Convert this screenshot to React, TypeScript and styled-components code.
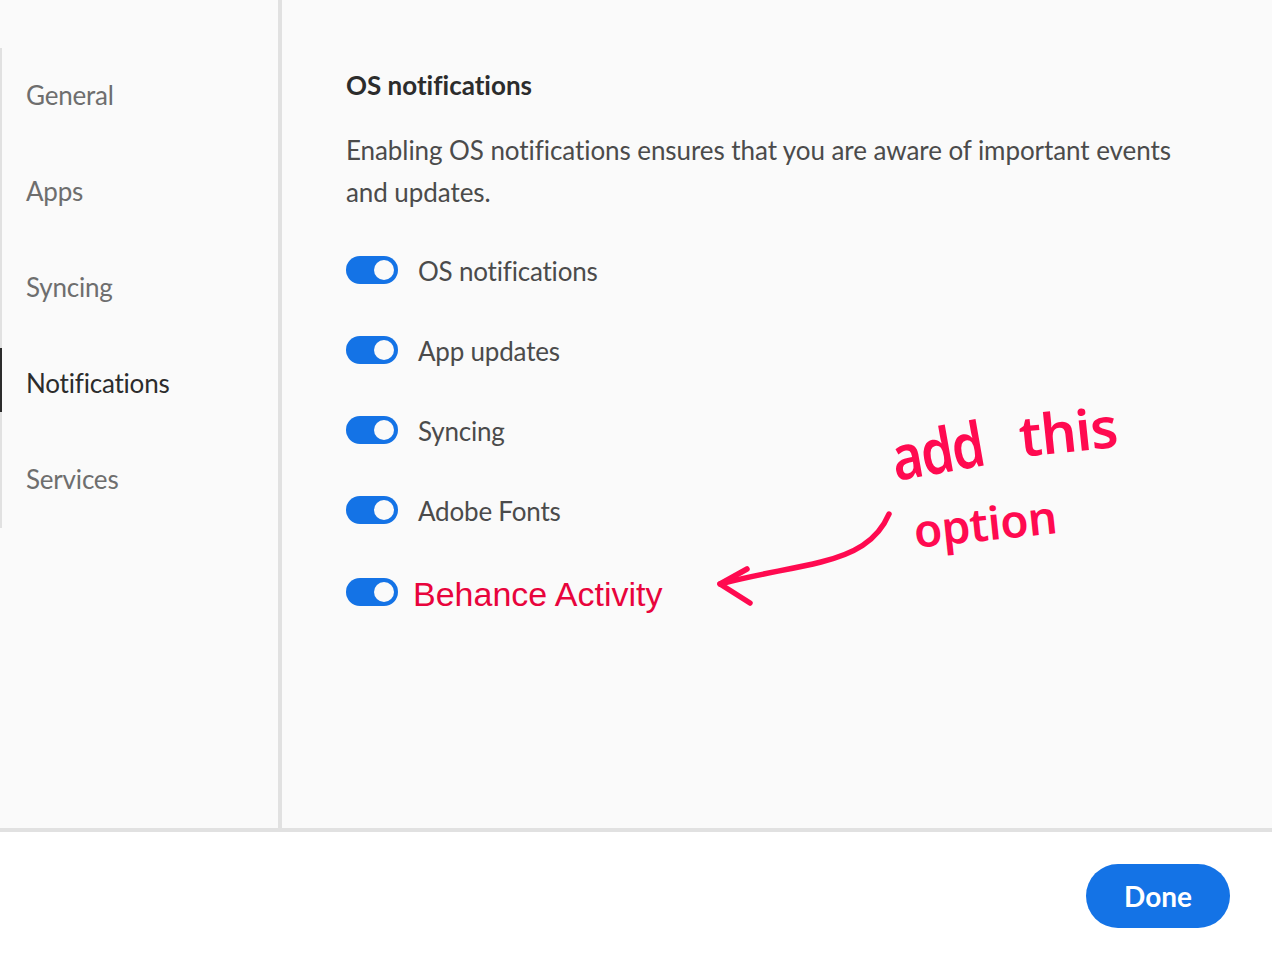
import React from "react"
import styled, { createGlobalStyle } from "styled-components"

const GlobalStyle = createGlobalStyle`
html,body{
  margin:0;
  padding:0;
  background:#fff;
}
body{
  font-family:Lato,"Noto Sans",sans-serif;
  font-variant-ligatures:none;
}
`

const navItems = ["General", "Apps", "Syncing", "Notifications", "Services"]
const toggles = ["OS notifications", "App updates", "Syncing", "Adobe Fonts"]

const Toggle = () => (
    <Track>
        <Knob />
    </Track>
)

export default function App() {
    return (
        <Page>
            <GlobalStyle />
            <Main>
                <Sidebar>
                    <Nav>
                        {navItems.map((item) => (
                            <NavItem key={item} $active={item === "Notifications"}>{item}</NavItem>
                        ))}
                    </Nav>
                </Sidebar>
                <Content>
                    <Heading>OS notifications</Heading>
                    <Description>
                        Enabling OS notifications ensures that you are aware of important events and updates.
                    </Description>
                    <ToggleList>
                        {toggles.map((label) => (
                            <ToggleRow key={label}>
                                <Toggle />
                                <ToggleLabel>{label}</ToggleLabel>
                            </ToggleRow>
                        ))}
                        <NewRow>
                            <Toggle />
                            <NewLabel>Behance Activity</NewLabel>
                        </NewRow>
                    </ToggleList>
                </Content>
                <Arrow width="180" height="100" viewBox="0 0 180 100">
                    <path d="M172 4C160 32 136 44 104 52C72 60 40 64 3 74" />
                    <path d="M30 59L3 74L33 93" />
                </Arrow>
                <NoteAdd>add</NoteAdd>
                <NoteThis>this</NoteThis>
                <NoteOption>option</NoteOption>
            </Main>
            <Footer>
                <DoneButton>Done</DoneButton>
            </Footer>
        </Page>
    )
}

const Page = styled.div`
width:1272px;
height:958px;
overflow:hidden;
display:flex;
flex-direction:column;
`
const Main = styled.div`
position:relative;
height:828px;
display:flex;
background:#fafafa;
border-bottom:4px solid #e1e1e1;
`
const Sidebar = styled.aside`
width:278px;
flex-shrink:0;
padding-top:48px;
border-right:4px solid #e1e1e1;
`
const Nav = styled.nav`
display:flex;
flex-direction:column;
border-left:2px solid #e1e1e1;
`
const NavItem = styled.div<{ $active: boolean }>`
height:96px;
box-sizing:border-box;
display:flex;
align-items:center;
padding:0 0 2px 24px;
font-size:26px;
letter-spacing:-0.2px;
color:${(p) => (p.$active ? "#2c2c2c" : "#6e6e6e")};
position:relative;
&::before{
  content:"";
  display:${(p) => (p.$active ? "block" : "none")};
  position:absolute;
  left:-2px;
  top:12px;
  bottom:20px;
  width:2px;
  background:#2c2c2c;
}
`
const Content = styled.main`
flex:1;
padding:68px 92px 0 64px;
`
const Heading = styled.h2`
margin:0;
font-size:26px;
line-height:34px;
font-weight:700;
color:#2c2c2c;
`
const Description = styled.p`
margin:27px 0 0;
font-size:26px;
line-height:42px;
letter-spacing:-0.07px;
color:#4b4b4b;
`
const ToggleList = styled.div`
margin-top:17px;
display:flex;
flex-direction:column;
`
const ToggleRow = styled.div`
height:80px;
display:flex;
align-items:center;
gap:20px;
`
const NewRow = styled(ToggleRow)`
gap:15px;
height:84px;
`
const Track = styled.div`
width:52px;
height:28px;
border-radius:14px;
background:#1473e6;
display:flex;
align-items:center;
justify-content:flex-end;
padding-right:4px;
box-sizing:border-box;
`
const Knob = styled.div`
width:20px;
height:20px;
border-radius:50%;
background:#fafafa;
`
const ToggleLabel = styled.span`
padding-top:2px;
font-size:26px;
letter-spacing:-0.2px;
color:#4b4b4b;
`
const NewLabel = styled.span`
font-family:"Liberation Sans",Arial,sans-serif;
font-size:34px;
margin-top:4px;
color:#e8043c;
`
const Arrow = styled.svg`
position:absolute;
left:717px;
top:510px;
fill:none;
stroke:#ff0a50;
stroke-width:5.5;
stroke-linecap:round;
stroke-linejoin:round;
`
const Note = styled.span`
position:absolute;
font-family:"Noto Sans",sans-serif;
font-weight:600;
color:#ff0a50;
line-height:1;
transform-origin:left bottom;
white-space:nowrap;
`
const NoteAdd = styled(Note)`
left:897px;
top:426px;
font-size:62px;
letter-spacing:-2px;
transform:rotate(-10deg) scaleX(.85);
`
const NoteThis = styled(Note)`
left:1022px;
top:407px;
font-size:56px;
letter-spacing:-1px;
transform:rotate(-6deg);
`
const NoteOption = styled(Note)`
left:916px;
top:507px;
font-size:46px;
letter-spacing:-0.5px;
transform:rotate(-6deg);
`
const Footer = styled.footer`
flex:1;
background:#fff;
display:flex;
justify-content:flex-end;
padding:32px 42px 0 0;
`
const DoneButton = styled.button`
width:144px;
height:64px;
border:none;
border-radius:32px;
background:#1473e6;
color:#fff;
font-family:inherit;
font-size:28px;
font-weight:700;
padding:0;
`
